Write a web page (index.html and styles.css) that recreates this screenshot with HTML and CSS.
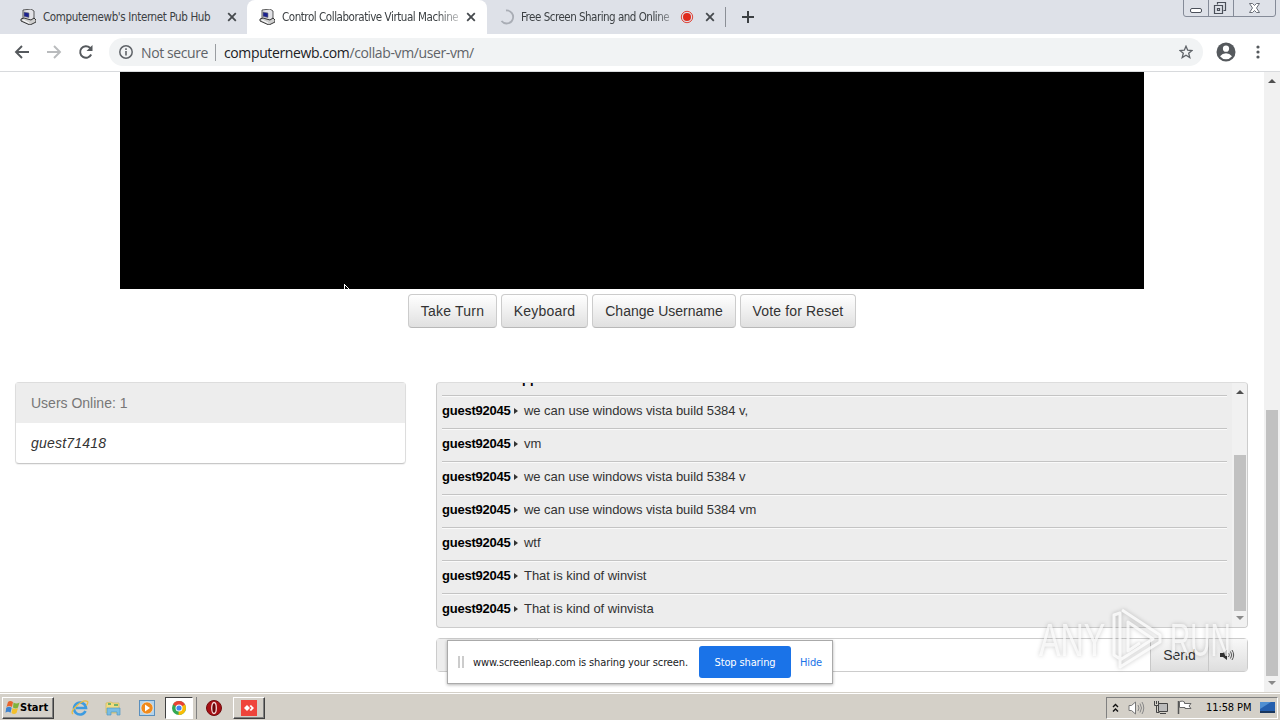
FILE: index.html
```html
<!DOCTYPE html>
<html lang="en">
  <head>
    <meta charset="utf-8" />
    <title>Control Collaborative Virtual Machines</title>
    <link rel="stylesheet" href="styles.css">
  </head>
  <body>
    <svg width="0" height="0" class="defs">
      <symbol id="pc" viewBox="0 0 16 16">
        <path d="M3 1l8-1 3 2v8l-4 2-7-2z" fill="#e2e2e6" stroke="#333" stroke-width=".8" />
        <path d="M4 3l5 1v4.500l-5-1z" fill="#1b2290" stroke="#777" stroke-width=".6" />
        <path d="M1 10l3-1 7 2 3-2 2 2v2l-6 3-9-4z" fill="#cfcfcf" stroke="#222" stroke-width=".9" />
        <path d="M3 11l6 3" stroke="#fff" />
      </symbol>
      <symbol id="close" viewBox="0 0 10 10">
        <path d="M1.200 1.200l7.600 7.600M8.800 1.200l-7.600 7.600" stroke="#45494d" stroke-width="1.800" />
      </symbol>
    </svg>

    <header class="tabs">
      <div class="tab first">
        <svg class="fav"><use href="#pc" /></svg>
        <span class="title t1">Computernewb's Internet Pub Hub</span>
        <svg class="x"><use href="#close" /></svg>
      </div>
      <div class="tab active">
        <svg class="fav"><use href="#pc" /></svg>
        <span class="title fade t2">Control Collaborative Virtual Machine</span>
        <svg class="x"><use href="#close" /></svg>
      </div>
      <div class="tab last">
        <svg class="fav" viewBox="0 0 16 16"><path d="M7 1.500a6.500 6.500 0 1 1-4.500 10.500" fill="none" stroke="#a9adb5" stroke-width="1.800" /></svg>
        <span class="title fade t3">Free Screen Sharing and Online</span>
        <svg class="rec" viewBox="0 0 14 14"><circle cx="7" cy="7" r="5.700" fill="none" stroke="#e04438" /><circle cx="7" cy="7" r="4" fill="#e02a1c" /></svg>
        <svg class="x"><use href="#close" /></svg>
      </div>
      <svg class="plus" viewBox="0 0 12 12"><path d="M6 0v12M0 6h12" stroke="#3c4043" stroke-width="2" /></svg>
      <svg class="winbtns" width="94" height="18" viewBox="0 0 94 18">
        <path d="M.5 0v14q0 2.500 2.500 2.500h87q2.500 0 2.500-2.500V0M25.500 0v16M50.500 0v16" fill="none" stroke="#858b98" />
        <rect x="7.500" y="8.500" width="11" height="4" rx="1.500" fill="#fff" stroke="#4b505a" />
        <path d="M34.500 4.500v-2h8v8h-2M31.500 5.500h8v8h-8zM34.500 8.500h2v2h-2z" fill="none" stroke="#4b505a" stroke-width="1.200" />
        <path d="M66.500 3.500h3l2 2 2-2h3l-3 4.500 3 4.500h-3l-2-2-2 2h-3l3-4.500z" fill="#fff" stroke="#5b606a" stroke-width=".9" />
      </svg>
    </header>

    <nav class="toolbar">
      <svg class="back" width="16" height="16" viewBox="0 0 16 16"><path d="M15 8H2M8 2L2 8l6 6" fill="none" stroke="#55595d" stroke-width="1.900" /></svg>
      <svg class="fwd" width="16" height="16" viewBox="0 0 16 16"><path d="M1 8h13M8 2l6 6-6 6" fill="none" stroke="#b9bbbd" stroke-width="1.900" /></svg>
      <svg class="reload" width="16" height="16" viewBox="0 0 16 16"><path d="M13.200 10.500A5.800 5.800 0 1 1 12 3.800l1 1" fill="none" stroke="#55595d" stroke-width="1.900" /><path d="M14.500 1v6h-6z" fill="#55595d" /></svg>
      <div class="omnibox">
        <svg width="14" height="14" viewBox="0 0 14 14"><circle cx="7" cy="7" r="6.200" fill="none" stroke="#5f6368" stroke-width="1.500" /><path d="M7 6v4.500M7 3.300v1.700" stroke="#5f6368" stroke-width="1.600" /></svg>
        <span class="secure">Not secure</span>
        <span class="url"><b>computernewb.com</b>/collab-vm/user-vm/</span>
        <svg class="star" width="14" height="14" viewBox="0 0 14 14"><path d="M7 1.200l1.700 4 4.300.3-3.300 2.800 1.100 4.200L7 10.200l-3.800 2.300 1.100-4.200L1 5.500l4.300-.3z" fill="none" stroke="#5f6368" stroke-width="1.300" /></svg>
      </div>
      <svg class="avatar" width="20" height="20" viewBox="0 0 20 20"><circle cx="10" cy="10" r="9.500" fill="#55595d" /><circle cx="10" cy="6.700" r="3.100" fill="#fff" /><path d="M4 14.300q2.500-3 6-3t6 3q-2.300 3-6 3t-6-3z" fill="#fff" /></svg>
      <svg class="dots" width="4" height="14" viewBox="0 0 4 14"><g fill="#55595d"><circle cx="2" cy="2" r="1.600" /><circle cx="2" cy="7" r="1.600" /><circle cx="2" cy="12" r="1.600" /></g></svg>
    </nav>

    <div class="viewport">
      <main>
        <div class="display">
          <svg class="cursor" width="6" height="8" viewBox="0 0 6 8"><path d="M.5 0v8M.5 .5l4.500 4.500" stroke="#fff" /></svg>
        </div>
        <div class="actions">
          <button class="btn turn">Take Turn</button>
          <button class="btn keyboard">Keyboard</button>
          <button class="btn username">Change Username</button>
          <button class="btn vote">Vote for Reset</button>
        </div>
        <div class="columns">
          <section class="users">
            <h2>Users Online: 1</h2>
            <p>guest71418</p>
          </section>
          <section class="chat">
            <div class="log">
              <ul>
                <li class="cut">pp</li>
                <li><b>guest92045</b><i></i><span>we can use windows vista build 5384 v,</span></li>
                <li><b>guest92045</b><i></i><span>vm</span></li>
                <li><b>guest92045</b><i></i><span>we can use windows vista build 5384 v</span></li>
                <li><b>guest92045</b><i></i><span>we can use windows vista build 5384 vm</span></li>
                <li><b>guest92045</b><i></i><span>wtf</span></li>
                <li><b>guest92045</b><i></i><span>That is kind of winvist</span></li>
                <li><b>guest92045</b><i></i><span>That is kind of winvista</span></li>
              </ul>
              <div class="scroll">
                <div class="up"></div>
                <div class="thumb"></div>
                <div class="down"></div>
              </div>
            </div>
            <div class="compose">
              <div class="addon"></div>
              <div class="input"></div>
              <div class="send">Send</div>
              <div class="sound">
                <svg width="16" height="12" viewBox="0 0 16 12"><path d="M1 4h3l4-3v10L4 8H1z" fill="#333" /><path d="M9.500 4q1.500 2 0 4M11.500 2.500q2.500 3.500 0 7M13 1q3.300 5 0 10" fill="none" stroke="#444" stroke-width=".9" /></svg>
              </div>
            </div>
          </section>
        </div>
      </main>
      <div class="scroll page">
        <div class="up"></div>
        <div class="thumb"></div>
        <div class="down"></div>
      </div>
    </div>

    <div class="share">
      <span class="grip"></span>
      <span class="msg">www.screenleap.com is sharing your screen.</span>
      <span class="stop">Stop sharing</span>
      <span class="hide">Hide</span>
    </div>

    <div class="watermark">
      <span class="any">ANY</span>
      <svg width="58" height="66" viewBox="0 0 58 66"><path d="M6 8l6-2v46l-6-4zM14 3l38 25v7L12 60v-7l33-21L20 15v29l12-8" fill="none" stroke="#fff" stroke-width="3" stroke-linejoin="round" /></svg>
      <span class="run">RUN</span>
    </div>

    <footer class="taskbar">
      <div class="start">
        <svg width="15" height="15" viewBox="0 0 15 15"><path d="M3 2q2-2 5 0L7 7Q4 5 1.500 7z" fill="#e8642c" /><path d="M8.500 2.500q3 2 6 0l-1.500 5q-2 2-5 0z" fill="#7fb33c" /><path d="M1.200 7.800q3-2 5.500 0l-1.200 5q-2.500-2-5 0z" fill="#3d83d0" /><path d="M7.500 8q3 2 5.500 0l-1.500 5q-2.500 2-5 0z" fill="#f3c02c" /></svg>
        <span>Start</span>
      </div>
      <div class="quick ie">
        <svg width="18" height="18" viewBox="0 0 18 18"><path d="M14.500 12A6 6 0 1 1 15 9H5" fill="none" stroke="#3d9be0" stroke-width="2.600" /><path d="M2 15Q-1 13 6 6.500T16.500 2.500q1 1-1 4" fill="none" stroke="#e9bd45" stroke-width="1.300" /></svg>
      </div>
      <div class="quick files">
        <svg width="16" height="16" viewBox="0 0 16 16"><path d="M1 3l5-1 2 1h6v10H1z" fill="#f2dc82" stroke="#d3b95a" stroke-width=".7" /><path d="M3 4h3M9 5h4" stroke="#4aa564" stroke-width="1.500" /><path d="M2 15V8h13v7h-3v-3H6v3z" fill="#79bde3" stroke="#5598c1" stroke-width=".7" /></svg>
      </div>
      <div class="quick media">
        <svg width="16" height="16" viewBox="0 0 16 16"><rect x=".5" y=".5" width="15" height="15" fill="#b4d3ea" stroke="#5a8fbd" /><circle cx="8" cy="8" r="6" fill="#f08a1c" stroke="#fff" stroke-width=".5" /><path d="M6 4.500v7l5-3.500z" fill="#fff" /></svg>
      </div>
      <div class="task chrome">
        <svg width="14" height="14" viewBox="0 0 14 14"><circle cx="7" cy="7" r="7" fill="#34a853" /><path d="M7 7L1 3.400A7 7 0 0 1 13.200 4z" fill="#ea4335" /><path d="M7 7l6-3.400A7 7 0 0 1 6.500 14z" fill="#fbbc05" /><circle cx="7" cy="7" r="3.500" fill="#fff" /><circle cx="7" cy="7" r="2.600" fill="#4285f4" /></svg>
      </div>
      <div class="quick opera">
        <svg width="16" height="16" viewBox="0 0 16 16"><circle cx="8" cy="8" r="7.500" fill="#a81014" stroke="#6f0b0e" /><ellipse cx="8" cy="8" rx="2.300" ry="5.500" fill="#6b0508" stroke="#f5dada" stroke-width="1.300" /></svg>
      </div>
      <div class="task anydesk">
        <svg width="16" height="16" viewBox="0 0 16 16"><path d="M0 0h16v16H0z" fill="#ef443b" /><path d="M6 5l3 3-3 3-3-3z" fill="#fff" /><path d="M8.500 6L10 5l3 3-3 3-1.500-1L10.500 8z" fill="#fff" /></svg>
      </div>
      <div class="tray">
        <svg width="7" height="10" viewBox="0 0 7 10"><path d="M1 4l2.500-2.500L6 4M1 8.500L3.500 6 6 8.500" fill="none" stroke="#111" stroke-width="1.400" /></svg>
        <svg class="vol" width="17" height="14" viewBox="0 0 17 14"><path d="M1 4.500h2.500l4-3.500v12l-4-3.500H1z" fill="#fff" stroke="#777" /><path d="M10 4q2 3 0 6M12 2.500q3 4.500 0 9M14 1q3.500 6 0 12" fill="none" stroke="#888" /></svg>
        <svg class="net" width="16" height="15" viewBox="0 0 16 15"><path d="M5.500 3.500h9v8h-9zM7 13.500h6" fill="#bbb" stroke="#444" /><path d="M1.500 1v4.500h4V1M3.500 1v3M3.500 6v6.500h3" fill="none" stroke="#444" /></svg>
        <svg class="flag" width="16" height="15" viewBox="0 0 16 15"><path d="M1.500 1v13" stroke="#555" stroke-width="1.500" /><path d="M2.500 1.500q3-1 5 .500v1.500h6.500l-2 2.500 2 2.500H8V7.500H2.500z" fill="#fff" stroke="#666" /></svg>
        <span class="clock">11:58 PM</span>
        <svg class="desk" width="15" height="13" viewBox="0 0 15 13"><path d="M0 1h15v9H0z" fill="#245fae" /><path d="M0 1h11L0 8z" fill="#4f8fd2" /><path d="M0 10h15v2H0z" fill="#18365e" /></svg>
      </div>
    </footer>
  </body>
</html>
```

FILE: styles.css
```css
* {
  box-sizing: border-box;
}

body {
  margin: 0;
  width: 1280px;
  height: 720px;
  overflow: hidden;
  display: flex;
  flex-direction: column;
  background: #fff;
  font-family: 'Liberation Sans', sans-serif;
}

svg {
  display: block;
  flex: none;
}

.defs {
  position: absolute;
}

.tabs {
  height: 34px;
  flex: none;
  display: flex;
  background: #dee1e8;
  font: 11.5px 'DejaVu Sans Condensed', 'DejaVu Sans', sans-serif;
  letter-spacing: -.36px;
  color: #3c4043;
}

.tab {
  height: 34px;
  display: flex;
  align-items: center;
}

.first {
  width: 247px;
  padding-left: 20px;
}

.active {
  width: 240px;
  padding-left: 12px;
  background: #fff;
  border-radius: 8px 8px 0 0;
}

.last {
  width: 239px;
  height: 20px;
  margin-top: 7px;
  padding-left: 12px;
  border-right: 1px solid #8b8f96;
}

.fav {
  width: 16px;
  height: 16px;
  margin-right: 7px;
}

.title {
  white-space: nowrap;
}

.t1 {
  width: 170px;
  margin-right: 14px;
}

.t2 {
  width: 176px;
  margin-right: 8px;
  letter-spacing: -.45px;
}

.t3 {
  width: 152px;
  margin-right: 7px;
  letter-spacing: -.5px;
}

.last .fav {
  margin-right: 6px;
}

.fade {
  -webkit-mask-image: linear-gradient(to right, #000 88%, rgba(0, 0, 0, .3));
}

.x {
  width: 10px;
  height: 10px;
}

.rec {
  width: 14px;
  height: 14px;
  margin-right: 11px;
}

.plus {
  width: 12px;
  height: 12px;
  margin: 11px 0 0 16px;
}

.winbtns {
  margin-left: auto;
  margin-right: 3px;
}

.toolbar {
  height: 38px;
  flex: none;
  display: flex;
  align-items: center;
  padding: 0 0 1px 14px;
  border-bottom: 1px solid #d8dadd;
}

.fwd,
.reload {
  margin-left: 16px;
}

.omnibox {
  width: 1094px;
  height: 28px;
  margin-left: 15px;
  padding: 0 10px;
  display: flex;
  align-items: center;
  border-radius: 14px;
  background: #f1f3f4;
  color: #5f6368;
  font: 14px 'Open Sans', sans-serif;
}

.secure {
  width: 75px;
  margin-left: 8px;
  border-right: 1px solid #9a9da1;
  line-height: 17px;
  letter-spacing: -.4px;
  white-space: nowrap;
}

.url {
  margin-left: 8px;
  letter-spacing: -.38px;
}

.url b {
  font-weight: normal;
  color: #202124;
}

.star {
  margin-left: auto;
}

.avatar {
  margin-left: 13px;
}

.dots {
  margin-left: 20px;
}

.viewport {
  height: 620px;
  flex: none;
  display: flex;
}

main {
  width: 1264px;
}

.display {
  height: 217px;
  margin: 0 120px;
  padding: 212px 0 0 224px;
  overflow: hidden;
  background: #000;
}

.actions {
  display: flex;
  justify-content: center;
  gap: 4px;
  margin-top: 5px;
}

.btn {
  height: 34px;
  padding: 0;
  border: 1px solid #ccc;
  border-bottom-color: #b8b8b8;
  border-radius: 4px;
  background: linear-gradient(#fff, #e0e0e0);
  color: #333;
  font: 14px 'Liberation Sans', sans-serif;
}

.turn {
  width: 89px;
  letter-spacing: .2px;
}

.keyboard {
  width: 87px;
  letter-spacing: .2px;
}

.username {
  width: 144px;
}

.vote {
  width: 116px;
  letter-spacing: .15px;
}

.columns {
  display: flex;
  gap: 30px;
  padding: 54px 16px 0 15px;
}

.users {
  width: 391px;
  height: 82px;
  border: 1px solid #ddd;
  border-bottom-color: #c8c8c8;
  border-radius: 4px;
  box-shadow: 0 1px 1px rgba(0, 0, 0, .06);
  font-size: 14px;
}

.users h2,
.users p {
  height: 40px;
  margin: 0;
  padding-left: 15px;
  line-height: 40px;
}

.users h2 {
  background: #ededed;
  color: #777;
  font-size: 14px;
  font-weight: normal;
}

.users p {
  color: #333;
  font-style: italic;
  letter-spacing: .2px;
}

.chat {
  width: 812px;
}

.log {
  height: 246px;
  display: flex;
  overflow: hidden;
  border: 1px solid #ccc;
  border-top-color: #ddd;
  border-radius: 4px;
  background: #ededed;
}

.log ul {
  width: 785px;
  height: 243px;
  margin: 0 5px;
  padding: 0;
  display: flex;
  flex-direction: column;
  justify-content: flex-end;
  list-style: none;
  font-size: 13px;
  color: #333;
}

.log li {
  height: 33px;
  flex: none;
  display: flex;
  border-top: 1px solid #c4c4c4;
  box-shadow: inset 0 1px #fafafa;
  line-height: 30px;
  letter-spacing: -.05px;
}

.log .cut {
  padding-left: 80px;
  border: 0;
  box-shadow: none;
  color: #000;
  font-weight: bold;
  line-height: 34px;
}

.log b {
  width: 72px;
  color: #000;
  letter-spacing: -.22px;
}

.log i {
  width: 4px;
  height: 6px;
  margin: 12px 6px 0 0;
  border: solid transparent;
  border-width: 3px 0 3px 4px;
  border-left-color: #333;
}

.scroll {
  width: 15px;
  height: 244px;
  padding: 7px 1px 0 2px;
  background: #f1f1f1;
}

.up,
.down {
  width: 8px;
  height: 4px;
  margin-left: 2px;
  border: solid transparent;
  border-width: 0 4px 4px;
  border-bottom-color: #505050;
}

.down {
  margin-top: 5px;
  border-width: 4px 4px 0;
  border-top-color: #8a8a8a;
}

.thumb {
  height: 156px;
  margin-top: 61px;
  background: #c1c1c1;
}

.page {
  width: 16px;
  height: 620px;
  padding: 7px 2px 0;
}

.page .thumb {
  height: 266px;
  margin-top: 327px;
}

.compose {
  height: 34px;
  display: flex;
  margin-top: 10px;
  border: 1px solid #ccc;
  border-radius: 4px;
}

.addon {
  width: 101px;
  background: #ededed;
  border-right: 1px solid #ccc;
}

.input {
  width: 612px;
}

.send,
.sound {
  display: flex;
  align-items: center;
  justify-content: center;
  border-left: 1px solid #c8c8c8;
  background: linear-gradient(#f8f8f8, #dedede);
}

.send {
  width: 58px;
  color: #333;
  font-size: 14px;
}

.sound {
  flex: 1;
  padding-right: 2px;
}

.share {
  position: absolute;
  left: 447px;
  top: 640px;
  width: 386px;
  height: 44px;
  display: flex;
  align-items: center;
  border: 1px solid #aaa;
  background: #fff;
  box-shadow: 0 1px 3px rgba(0, 0, 0, .3);
  color: #202124;
  font: 11px 'DejaVu Sans Condensed', 'DejaVu Sans', sans-serif;
  letter-spacing: -.13px;
}

.grip {
  width: 6px;
  height: 12px;
  margin-left: 10px;
  border: solid #ccc;
  border-width: 0 2px;
}

.msg {
  width: 215px;
  margin: 0 11px 0 9px;
  white-space: nowrap;
}

.stop {
  width: 92px;
  height: 32px;
  border-radius: 3px;
  background: #1a73e8;
  color: #fff;
  line-height: 33px;
  text-align: center;
}

.hide {
  margin-left: 9px;
  color: #1a73e8;
}

.watermark {
  position: absolute;
  left: 1039px;
  top: 607px;
  width: 200px;
  display: flex;
  align-items: center;
  color: rgba(255, 255, 255, .72);
  font: 46px/66px 'Liberation Sans', sans-serif;
  filter: drop-shadow(0 0 2px rgba(0, 0, 0, .28));
}

.watermark svg {
  margin: 0 4px 0 5px;
  opacity: .8;
}

.any,
.run {
  width: 64px;
  transform: scaleX(.7);
  transform-origin: left;
}

.run {
  transform: scaleX(.61);
}

.taskbar {
  height: 28px;
  flex: none;
  display: flex;
  align-items: center;
  padding: 2px 2px 0;
  background: #d4d0c8;
  border-top: 1px solid #d4d0c8;
  box-shadow: inset 0 1px #fff;
  color: #000;
  font: 11px 'DejaVu Sans Condensed', 'DejaVu Sans', sans-serif;
}

.start,
.task {
  height: 22px;
  display: flex;
  align-items: center;
  border: 1px solid;
  border-color: #fff #404040 #404040 #fff;
  box-shadow: inset -1px -1px #808080;
}

.start {
  width: 52px;
  padding-left: 2px;
  font-weight: bold;
}

.ie {
  margin-left: 17px;
}

.files {
  margin-left: 16px;
}

.media {
  margin-left: 18px;
}

.chrome {
  width: 28px;
  margin-left: 10px;
  padding-left: 6px;
  background: #fff;
  border-color: #404040 #fff #fff #404040;
  box-shadow: 3px 0 #d4d0c8, 4px 0 #808080;
}

.opera {
  margin-left: 13px;
}

.anydesk {
  width: 32px;
  margin-left: 11px;
  padding-left: 7px;
}

.tray {
  width: 172px;
  height: 22px;
  display: flex;
  align-items: center;
  margin-left: auto;
  padding-left: 5px;
  border: 1px solid;
  border-color: #808080 #fff #fff #808080;
}

.vol {
  margin-left: 9px;
}

.net {
  margin-left: 8px;
}

.flag {
  margin-left: 8px;
}

.clock {
  width: 45px;
  margin-left: 13px;
  letter-spacing: -.1px;
  white-space: nowrap;
}

.desk {
  margin-left: 9px;
}
```
